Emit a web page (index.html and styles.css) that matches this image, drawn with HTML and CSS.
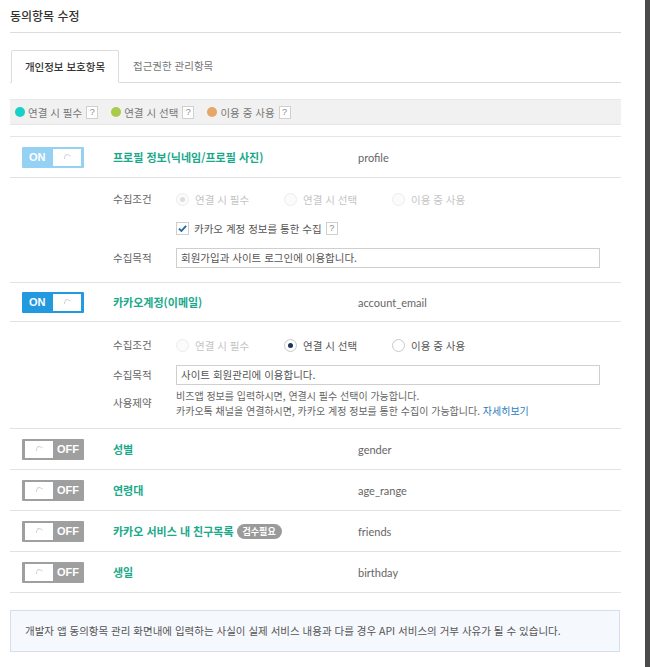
FILE: index.html
```html
<!DOCTYPE html>
<html lang="ko">
<head>
<meta charset="utf-8">
<title>동의항목 수정</title>
<link rel="stylesheet" href="styles.css">
</head>
<body>
<div class="page">
  <div class="panel">
    <h2 class="title">동의항목 수정</h2>
    <div class="tabs">
      <div class="tab active">개인정보 보호항목</div>
      <div class="tab">접근권한 관리항목</div>
    </div>
    <div class="legend">
      <span class="leg"><i class="dot dot-req"></i>연결 시 필수<b class="help">?</b></span>
      <span class="leg"><i class="dot dot-opt"></i>연결 시 선택<b class="help">?</b></span>
      <span class="leg"><i class="dot dot-use"></i>이용 중 사용<b class="help">?</b></span>
    </div>

    <div class="list">
      <div class="row">
        <div class="toggle on pale"><span class="tlabel">ON</span><span class="knob"><i></i></span></div>
        <div class="name">프로필 정보(닉네임/프로필 사진)</div>
        <div class="key">profile</div>
      </div>
      <div class="detail d1">
        <div class="label">수집조건</div>
        <div class="radios">
          <span class="radio dis checked"><i></i>연결 시 필수</span>
          <span class="radio dis"><i></i>연결 시 선택</span>
          <span class="radio dis"><i></i>이용 중 사용</span>
        </div>
        <div class="label"></div>
        <div class="check"><span class="cbox"><svg viewBox="0 0 14 14" width="13" height="13"><path d="M2.5 7.2 L5.6 10.2 L11.6 3.6" fill="none" stroke="#1f6aa5" stroke-width="2.4"/></svg></span>카카오 계정 정보를 통한 수집<b class="help">?</b></div>
        <div class="label end">수집목적</div>
        <div class="input end">회원가입과 사이트 로그인에 이용합니다.</div>
      </div>

      <div class="row short">
        <div class="toggle on"><span class="tlabel">ON</span><span class="knob"><i></i></span></div>
        <div class="name">카카오계정(이메일)</div>
        <div class="key">account_email</div>
      </div>
      <div class="detail d2">
        <div class="label">수집조건</div>
        <div class="radios">
          <span class="radio dis"><i></i>연결 시 필수</span>
          <span class="radio checked"><i></i>연결 시 선택</span>
          <span class="radio"><i></i>이용 중 사용</span>
        </div>
        <div class="label end">수집목적</div>
        <div class="input end">사이트 회원관리에 이용합니다.</div>
        <div class="label">사용제약</div>
        <div class="note">비즈앱 정보를 입력하시면, 연결시 필수 선택이 가능합니다.<br>카카오톡 채널을 연결하시면, 카카오 계정 정보를 통한 수집이 가능합니다. <a class="more">자세히보기</a></div>
      </div>

      <div class="row">
        <div class="toggle off"><span class="knob"><i></i></span><span class="tlabel">OFF</span></div>
        <div class="name">성별</div>
        <div class="key">gender</div>
      </div>
      <div class="row">
        <div class="toggle off"><span class="knob"><i></i></span><span class="tlabel">OFF</span></div>
        <div class="name">연령대</div>
        <div class="key">age_range</div>
      </div>
      <div class="row">
        <div class="toggle off"><span class="knob"><i></i></span><span class="tlabel">OFF</span></div>
        <div class="name">카카오 서비스 내 친구목록 <span class="badge">검수필요</span></div>
        <div class="key">friends</div>
      </div>
      <div class="row">
        <div class="toggle off"><span class="knob"><i></i></span><span class="tlabel">OFF</span></div>
        <div class="name">생일</div>
        <div class="key">birthday</div>
      </div>
    </div>

    <div class="notice">개발자 앱 동의항목 관리 화면내에 입력하는 사실이 실제 서비스 내용과 다를 경우 API 서비스의 거부 사유가 될 수 있습니다.</div>
  </div>
  <div class="edge"></div>
</div>
</body>
</html>
```

FILE: styles.css
```css
* { box-sizing: border-box; }
html, body { margin: 0; padding: 0; background: #fff; }
body {
  font-family: "Noto Sans CJK KR", "Noto Sans", sans-serif;
  color: #555;
  font-size: 11px;
}
.page { display: flex; width: 650px; height: 667px; overflow: hidden; }
.panel { flex: 1; padding: 0 24px 0 10px; }
.edge { width: 5px; background: #4b4b4b; }

.title {
  margin: 0;
  height: 33px;
  line-height: 32px;
  font-size: 12px;
  font-weight: 500;
  color: #333;
  border-bottom: 1px solid #dcdcdc;
}

.tabs {
  margin-top: 17px;
  display: flex;
  height: 33px;
  border-bottom: 1px solid #dcdcdc;
}
.tab {
  height: 33px;
  line-height: 32px;
  padding: 0 14px;
  font-size: 10.5px;
  color: #777;
}
.tab.active {
  width: 108px;
  margin-left: 1px;
  text-align: center;
  padding: 0;
  color: #333;
  font-weight: 500;
  background: #fff;
  border: 1px solid #dcdcdc;
  border-bottom-color: #fff;
  border-radius: 2px 2px 0 0;
}

.legend {
  margin-top: 16px;
  height: 26px;
  background: #f1f1f1;
  border-top: 1px solid #e8e8e8;
  border-bottom: 1px solid #e6e6e6;
  display: flex;
  align-items: center;
  padding-left: 5px;
  gap: 13px;
  font-size: 10.5px;
  color: #777;
}
.leg { display: flex; align-items: center; }
.dot { width: 10px; height: 10px; border-radius: 50%; margin-right: 3px; display: inline-block; }
.dot-req { background: #17d0c8; }
.dot-opt { background: #a9cb4c; }
.dot-use { background: #e8a56a; }
.help {
  display: inline-flex;
  align-items: center;
  justify-content: center;
  width: 12px;
  height: 13px;
  margin-left: 4px;
  border: 1px solid #d0d0d0;
  background: #fff;
  font-size: 9px;
  font-weight: 400;
  color: #888;
  font-family: "Liberation Sans", sans-serif;
}

.list { margin-top: 11px; border-top: 1px solid #e6e6e6; }
.row {
  display: grid;
  grid-template-columns: 91px 245px 1fr;
  align-items: center;
  height: 41px;
  padding-left: 12px;
  border-bottom: 1px solid #e2e2e2;
}
.row.short { height: 39px; }
.name { font-weight: 700; color: #1aa98b; font-size: 11px; display: flex; align-items: center; gap: 3px; }
.key { color: #666; font-size: 11px; font-family: "Lato", "Noto Sans", sans-serif; }

.toggle {
  width: 62px;
  height: 21px;
  display: flex;
  align-items: center;
  padding: 2px 3px;
  border-radius: 1px;
  font-family: "Liberation Sans", sans-serif;
  font-weight: 700;
  font-size: 11px;
  color: #fff;
}
.toggle.on { background: #2399df; }
.toggle.on.pale { background: #94d1f2; }
.toggle.off { background: #9f9f9f; }
.toggle .tlabel { flex: 1; text-align: center; }
.toggle.on .tlabel { text-align: left; padding-left: 4px; }
.toggle.off .tlabel { padding-left: 2px; }
.knob {
  width: 28px;
  height: 17px;
  background: #fff;
  display: flex;
  align-items: center;
  justify-content: center;
}
.knob i {
  width: 7px;
  height: 7px;
  border-radius: 50%;
  border: 1px solid #d2d2d2;
  border-bottom-color: transparent;
  border-right-color: transparent;
  transform: rotate(20deg);
}

.badge {
  display: inline-block;
  background: #9a9a9a;
  color: #fff;
  font-size: 9px;
  font-weight: 700;
  border-radius: 8px;
  padding: 0 6px;
  height: 15px;
  line-height: 15px;
}

.detail {
  display: grid;
  grid-template-columns: 63px 424px;
  align-items: center;
  padding-left: 103px;
  border-bottom: 1px solid #e2e2e2;
}
.d1 { padding-top: 11px; padding-bottom: 14px; grid-template-rows: 20px 38px 21px; }
.d2 { padding-top: 13px; padding-bottom: 7px; grid-template-rows: 20px 30px 36px; }
.end { align-self: end; }
.label { font-size: 10.5px; color: #666; line-height: 20px; }
.radios { display: flex; }
.radio { display: flex; align-items: center; width: 108px; color: #555; font-size: 10.5px; }
.radio i {
  width: 13px;
  height: 13px;
  border-radius: 50%;
  border: 1px solid #c9c9c9;
  background: #fff;
  margin-right: 6px;
  display: flex;
  align-items: center;
  justify-content: center;
}
.radio.checked i::after { content: ""; width: 5px; height: 5px; border-radius: 50%; background: #1c3558; }
.radio.dis { color: #c4c4c4; }
.radio.dis i { border-color: #ececec; background: #fbfbfb; }
.radio.dis.checked i::after { background: #dedede; }

.check { display: flex; align-items: center; color: #555; font-size: 10.5px; }
.cbox {
  width: 13px; height: 13px;
  border: 1px solid #cfcfcf;
  margin-right: 5px;
  display: flex; align-items: center; justify-content: center;
}
.cbox svg { display: block; }

.input {
  height: 20px;
  line-height: 18px;
  border: 1px solid #cfcfcf;
  padding: 0 4px;
  font-size: 10.5px;
  color: #555;
}
.note { font-size: 10px; line-height: 15px; color: #666; }
.more { color: #2b7bc0; }

.notice {
  margin-top: 17px;
  margin-right: 1px;
  height: 42px;
  line-height: 40px;
  padding-left: 14px;
  background: #f5f8fd;
  border: 1px solid #d4deee;
  font-size: 10.5px;
  color: #555;
}
```
